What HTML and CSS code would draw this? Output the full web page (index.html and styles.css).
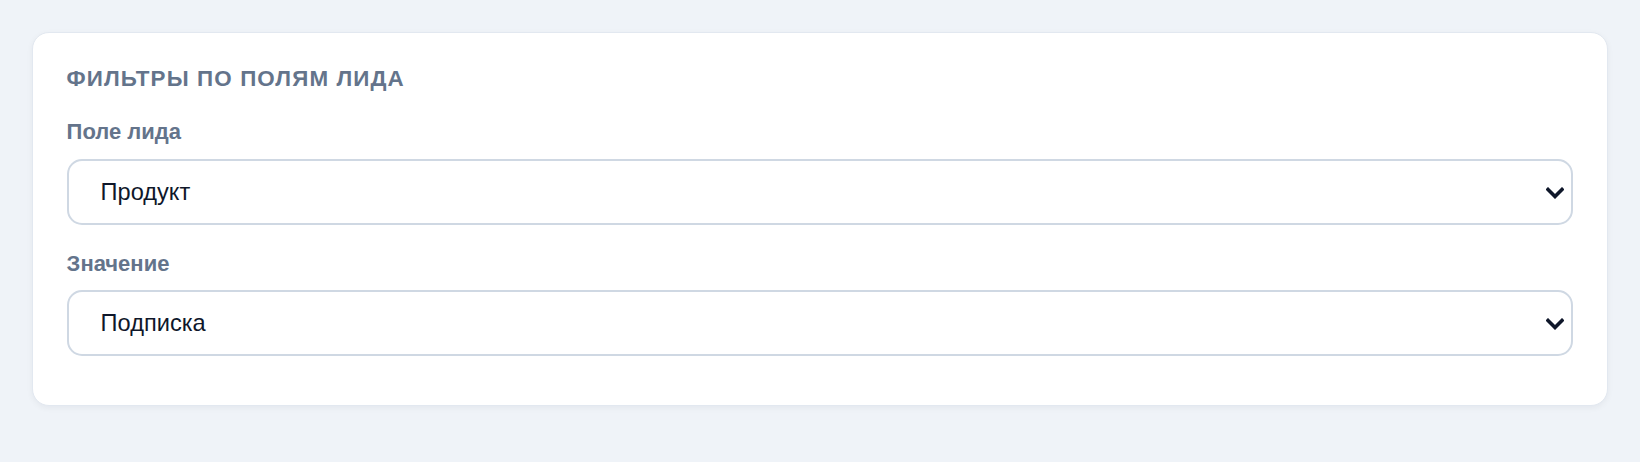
FILE: index.html
```html
<!DOCTYPE html>
<html lang="ru">
<head>
<meta charset="utf-8">
<title>Фильтры по полям лида</title>
<link rel="stylesheet" href="styles.css">
</head>
<body>
<main class="page">
  <section class="card">
    <h2 class="card-title">Фильтры по полям лида</h2>
    <div class="field">
      <label class="field-label" for="lead-field">Поле лида</label>
      <div class="select-wrap">
        <select id="lead-field" class="select">
          <option>Продукт</option>
        </select>
        <svg class="chevron" viewBox="0 0 18 12" width="18" height="12" aria-hidden="true"><path d="M2 2.5 L9 9.5 L16 2.5" fill="none" stroke="#0f172a" stroke-width="3.6" stroke-linecap="square" stroke-linejoin="miter"/></svg>
      </div>
    </div>
    <div class="field">
      <label class="field-label" for="lead-value">Значение</label>
      <div class="select-wrap">
        <select id="lead-value" class="select">
          <option>Подписка</option>
        </select>
        <svg class="chevron" viewBox="0 0 18 12" width="18" height="12" aria-hidden="true"><path d="M2 2.5 L9 9.5 L16 2.5" fill="none" stroke="#0f172a" stroke-width="3.6" stroke-linecap="square" stroke-linejoin="miter"/></svg>
      </div>
    </div>
  </section>
</main>
</body>
</html>
```

FILE: styles.css
```css
html, body {
  margin: 0;
  padding: 0;
  background: #eff3f8;
}

body {
  font-family: "Liberation Sans", Arial, sans-serif;
}

.page {
  padding: 32px;
}

.card {
  background: #ffffff;
  border: 1px solid #e2e8f0;
  border-radius: 17px;
  box-shadow: 0 2px 6px rgba(15, 23, 42, 0.05);
  padding: 33px 33.6px 49px 33.6px;
  display: flex;
  flex-direction: column;
}

.card-title {
  margin: 0 0 28px 0;
  font-size: 22.4px;
  line-height: 26px;
  font-weight: 700;
  text-transform: uppercase;
  letter-spacing: 0.05em;
  color: #64748b;
}

.field {
  display: flex;
  flex-direction: column;
}

.field + .field {
  margin-top: 27px;
}

.field-label {
  font-size: 22px;
  line-height: 24px;
  font-weight: 700;
  color: #64748b;
  margin-bottom: 14.5px;
}

.select-wrap {
  position: relative;
}

.select {
  appearance: none;
  -webkit-appearance: none;
  width: 100%;
  height: 66px;
  box-sizing: border-box;
  border: 2px solid #cfd8e3;
  border-radius: 15px;
  background: #ffffff;
  padding: 0 48px 0 32px;
  font-family: "Liberation Sans", Arial, sans-serif;
  font-size: 23.6px;
  color: #0f172a;
  outline: none;
}

.chevron {
  position: absolute;
  right: 9px;
  top: 50%;
  margin-top: -5px;
  pointer-events: none;
}
```
